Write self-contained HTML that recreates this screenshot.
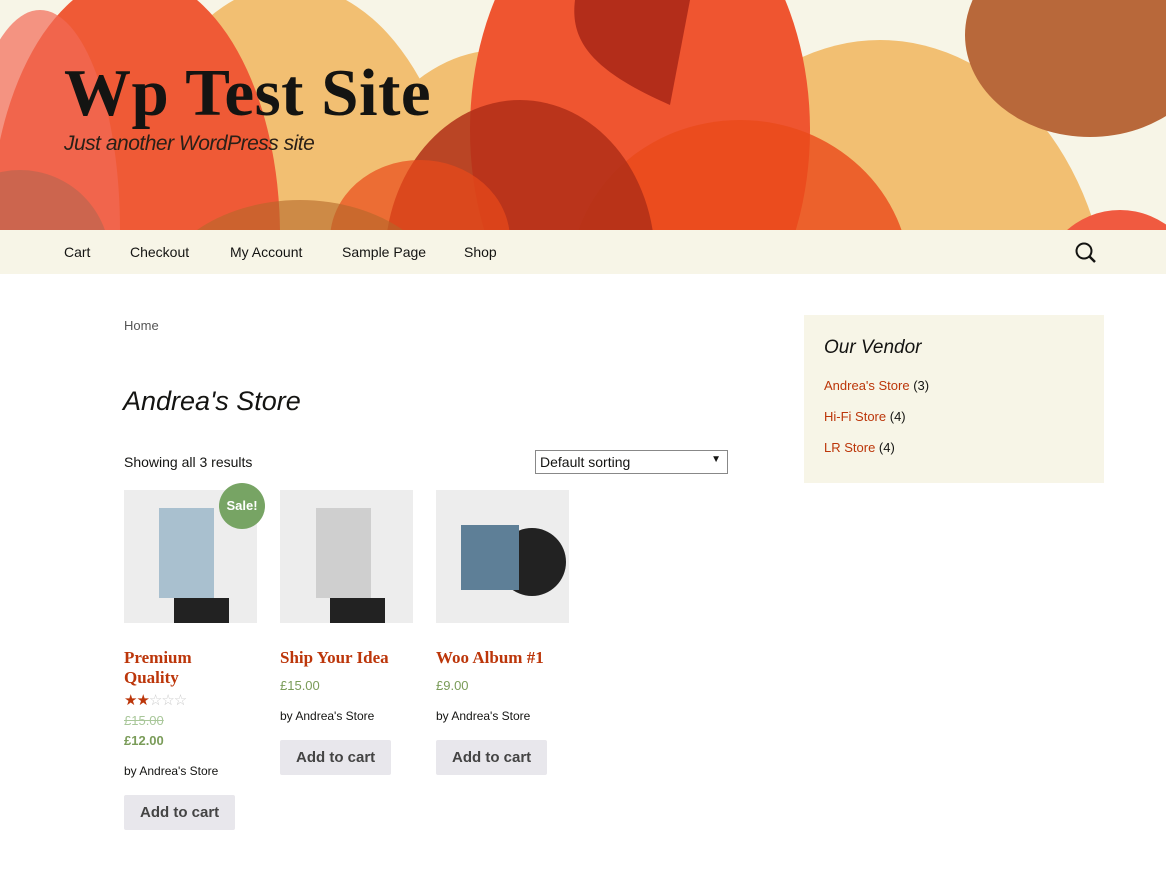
<!DOCTYPE html>
<html><head><meta charset="utf-8"><style>
*{margin:0;padding:0;box-sizing:border-box}
body{width:1166px;height:870px;background:#fff;font-family:"Liberation Sans",sans-serif;color:#141412;position:relative;overflow:hidden}
.a{position:absolute}
.hdr{left:0;top:0;width:1166px;height:230px;background:#f7f5e7;overflow:hidden}
.title{left:64px;top:55px;font-family:"Liberation Serif",serif;font-weight:bold;font-size:67px;letter-spacing:0.5px;color:#141412;white-space:nowrap}
.tag{left:64px;top:132px;font-style:italic;font-size:21px;color:#2a2018;white-space:nowrap;letter-spacing:-0.5px}
.nav{left:0;top:230px;width:1166px;height:44px;background:#f7f5e7}
.nav span{position:absolute;top:14px;font-size:14px;color:#141412}
.prod{position:absolute;top:490px;width:133px}
.img{width:133px;height:133px;background:#ededed;position:relative;overflow:hidden}
.pt{font-family:"Liberation Serif",serif;font-weight:bold;font-size:17px;color:#bc360a;line-height:20px;margin-top:25px}
.price{color:#7a9c59;font-size:13px;margin-top:10px}
.by{font-size:12px;margin-top:16px;color:#141412}
.btn{display:inline-block;background:#e8e7ec;border-radius:2px;font-weight:bold;font-size:15px;color:#444;padding:9px 16px;margin-top:17px;height:35px}
</style></head><body>
<div class="a hdr">
<svg width="1166" height="230" viewBox="0 0 1166 230">
<ellipse cx="290" cy="270" rx="175" ry="285" fill="#f2bf72"/>
<ellipse cx="135" cy="235" rx="145" ry="260" fill="#ef5a36"/>
<ellipse cx="40" cy="230" rx="80" ry="220" fill="#f26a55" opacity=".7"/>
<ellipse cx="500" cy="260" rx="160" ry="210" fill="#f2bf72"/>
<ellipse cx="880" cy="330" rx="230" ry="290" fill="#f2bf72"/>
<ellipse cx="640" cy="130" rx="170" ry="250" fill="#ef5530"/>
<ellipse cx="740" cy="280" rx="170" ry="160" fill="#ea4a1a" opacity=".8"/>
<path d="M575 0 C570 40 590 70 670 105 L690 0 Z" fill="#b32d1a"/>
<ellipse cx="520" cy="260" rx="135" ry="160" fill="#b02f17" opacity=".85"/>
<ellipse cx="420" cy="240" rx="90" ry="80" fill="#ea4a1a" opacity=".7"/>
<ellipse cx="300" cy="310" rx="150" ry="110" fill="#b4682a" opacity=".6"/>
<ellipse cx="1090" cy="35" rx="125" ry="102" fill="#b8683a"/>
<ellipse cx="1120" cy="290" rx="80" ry="80" fill="#f05a40"/>
<ellipse cx="20" cy="260" rx="90" ry="90" fill="#b46650" opacity=".6"/>
</svg>
</div>
<div class="a title">Wp Test Site</div>
<div class="a tag">Just another WordPress site</div>
<div class="a nav">
<span style="left:64px">Cart</span><span style="left:130px">Checkout</span><span style="left:230px">My Account</span><span style="left:342px">Sample Page</span><span style="left:464px">Shop</span>
<svg class="a" style="left:1074px;top:11px" width="24" height="24" viewBox="0 0 24 24"><circle cx="10" cy="10" r="7.5" fill="none" stroke="#141412" stroke-width="2"/><path d="M15.5 15.5 L21 21" stroke="#141412" stroke-width="2.5"/></svg>
</div>
<div class="a" style="left:124px;top:318px;font-size:13px;color:#555">Home</div>
<div class="a" style="left:123px;top:386px;font-size:27px;font-style:italic;font-weight:300;color:#141412">Andrea's Store</div>
<div class="a" style="left:124px;top:454px;font-size:14px">Showing all 3 results</div>
<div class="a" style="left:535px;top:450px;width:193px;height:24px;border:1px solid #888;font-size:14px;padding:3px 4px">Default sorting<span style="position:absolute;right:6px;top:3px;font-size:10px">▼</span></div>

<div class="prod" style="left:124px">
<div class="img"><div class="a" style="left:35px;top:18px;width:55px;height:90px;background:#a9c0cf"></div><div class="a" style="left:50px;top:108px;width:55px;height:25px;background:#222"></div></div>
<div class="a" style="left:95px;top:-7px;width:46px;height:46px;border-radius:50%;background:#77a464;color:#fff;font-weight:bold;font-size:13px;text-align:center;line-height:46px">Sale!</div>
<div class="pt">Premium<br>Quality</div>
<div style="color:#bc360a;font-size:15px;margin-top:3px;letter-spacing:-1px">★★<span style="color:#ccc">☆☆☆</span></div>
<div class="price" style="margin-top:4px;color:#a9c79a;text-decoration:line-through">£15.00</div>
<div class="price" style="margin-top:5px;font-weight:bold">£12.00</div>
<div class="by">by Andrea's Store</div>
<div class="btn">Add to cart</div>
</div>
<div class="prod" style="left:280px">
<div class="img"><div class="a" style="left:36px;top:18px;width:55px;height:90px;background:#cfcfcf"></div><div class="a" style="left:50px;top:108px;width:55px;height:25px;background:#222"></div></div>
<div class="pt">Ship Your Idea</div>
<div class="price">£15.00</div>
<div class="by">by Andrea's Store</div>
<div class="btn">Add to cart</div>
</div>
<div class="prod" style="left:436px">
<div class="img"><div class="a" style="left:62px;top:38px;width:68px;height:68px;border-radius:50%;background:#222"></div><div class="a" style="left:25px;top:35px;width:58px;height:65px;background:#5e7f97"></div></div>
<div class="pt">Woo Album #1</div>
<div class="price">£9.00</div>
<div class="by">by Andrea's Store</div>
<div class="btn">Add to cart</div>
</div>

<div class="a" style="left:804px;top:315px;width:300px;height:168px;background:#f7f5e7;padding:22px 20px">
<div style="font-size:19px;font-style:italic;color:#141412;font-weight:300">Our Vendor</div>
<div style="font-size:13px;margin-top:11px;line-height:31px;color:#141412"><span style="color:#bc360a">Andrea's Store</span> (3)<br><span style="color:#bc360a">Hi-Fi Store</span> (4)<br><span style="color:#bc360a">LR Store</span> (4)</div>
</div>
</body></html>
